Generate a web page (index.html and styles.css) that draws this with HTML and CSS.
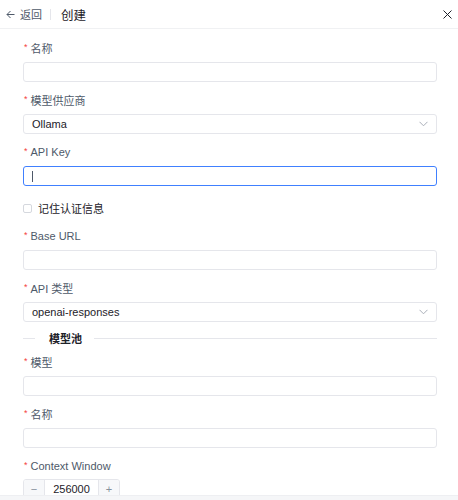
FILE: index.html
```html
<!DOCTYPE html>
<html lang="zh">
<head>
<meta charset="utf-8">
<title>创建</title>
<link rel="stylesheet" href="styles.css">
</head>
<body>
<div class="page">
  <header class="header">
    <div class="back">
      <svg class="back-icon" width="9" height="9" viewBox="0 0 9 9"><path d="M8.5 4.5H1M4.5 1L1 4.5L4.5 8" fill="none" stroke="#4e5969" stroke-width="1"/></svg>
      <span class="back-text">返回</span>
    </div>
    <span class="vsep"></span>
    <span class="title">创建</span>
    <svg class="close" width="9" height="9" viewBox="0 0 9 9"><path d="M0.5 0.5L8.5 8.5M8.5 0.5L0.5 8.5" stroke="#1d2129" stroke-width="1"/></svg>
  </header>
  <main class="form">
    <div class="field">
      <label class="label"><span class="req">*</span>名称</label>
      <div class="input"></div>
    </div>
    <div class="field">
      <label class="label"><span class="req">*</span>模型供应商</label>
      <div class="input select"><span class="value">Ollama</span><svg class="chev" width="9" height="6" viewBox="0 0 9 6"><path d="M0.5 0.8L4.5 4.8L8.5 0.8" fill="none" stroke="#a9aeb8" stroke-width="1"/></svg></div>
    </div>
    <div class="field">
      <label class="label"><span class="req">*</span>API Key</label>
      <div class="input focused"><span class="caret"></span></div>
    </div>
    <div class="check-row">
      <span class="checkbox"></span>
      <span class="check-text">记住认证信息</span>
    </div>
    <div class="field">
      <label class="label"><span class="req">*</span>Base URL</label>
      <div class="input"></div>
    </div>
    <div class="field">
      <label class="label"><span class="req">*</span>API 类型</label>
      <div class="input select"><span class="value">openai-responses</span><svg class="chev" width="9" height="6" viewBox="0 0 9 6"><path d="M0.5 0.8L4.5 4.8L8.5 0.8" fill="none" stroke="#a9aeb8" stroke-width="1"/></svg></div>
    </div>
    <div class="divider">
      <span class="line short"></span>
      <span class="divider-text">模型池</span>
      <span class="line"></span>
    </div>
    <div class="field">
      <label class="label"><span class="req">*</span>模型</label>
      <div class="input"></div>
    </div>
    <div class="field">
      <label class="label"><span class="req">*</span>名称</label>
      <div class="input"></div>
    </div>
    <div class="field">
      <label class="label last"><span class="req">*</span>Context Window</label>
      <div class="stepper">
        <span class="step-btn">−</span>
        <span class="step-value">256000</span>
        <span class="step-btn">+</span>
      </div>
    </div>
  </main>
  <footer class="footer"></footer>
</div>
</body>
</html>
```

FILE: styles.css
```css
* { box-sizing: border-box; }
html, body { margin: 0; padding: 0; background: #fff; }
body {
  font-family: "Liberation Sans", "Noto Sans CJK SC", sans-serif;
  color: #1d2129;
}
.page {
  height: 100vh;
  display: flex;
  flex-direction: column;
  overflow: hidden;
}
.header {
  height: 29px;
  flex: none;
  display: flex;
  align-items: center;
  padding: 0 4px 0 6px;
  border-bottom: 1px solid #f0f1f3;
}
.back {
  display: flex;
  align-items: center;
  gap: 5px;
  font-size: 11px;
  color: #4e5969;
}
.back-icon { display: block; }
.vsep {
  width: 1px;
  height: 11px;
  background: #e5e6eb;
  margin: 0 10px 0 8px;
}
.title {
  font-size: 12.5px;
  color: #1d2129;
}
.close { margin-left: auto; margin-right: 2px; display: block; }

.form {
  flex: 1;
  overflow: hidden;
  padding: 11px 21px 0 23px;
}
.field { margin-bottom: 10px; }
.label {
  display: flex;
  align-items: center;
  height: 16px;
  margin-bottom: 6px;
  font-size: 11px;
  color: #4e5969;
}
.label.last { margin-bottom: 5px; }
.req {
  color: #f53f3f;
  font-size: 9px;
  margin: 0 3px 0 1px;
  position: relative;
  top: -1px;
}
.input {
  height: 20px;
  border: 1px solid #e5e6eb;
  border-radius: 3px;
  background: #fff;
  display: flex;
  align-items: center;
  padding: 0 8px;
}
.input.focused { border-color: #4080ff; }
.caret {
  width: 1px;
  height: 11px;
  background: #4e5969;
}
.select .value {
  font-size: 11px;
  color: #1d2129;
  flex: 1;
}
.chev { display: block; }

.check-row {
  display: flex;
  align-items: center;
  height: 16px;
  margin: 14px 0 12px;
}
.checkbox {
  width: 9px;
  height: 9px;
  border: 1px solid #d5d8de;
  border-radius: 2px;
  margin-right: 6px;
}
.check-text {
  font-size: 11px;
  color: #1d2129;
}

.divider {
  display: flex;
  align-items: center;
  height: 16px;
  margin: -2px 0 8px;
}
.line {
  flex: 1;
  height: 1px;
  background: #e5e6eb;
}
.line.short { flex: none; width: 12px; }
.divider-text {
  font-size: 11px;
  font-weight: bold;
  color: #1d2129;
  padding: 0 12px 0 14px;
}

.stepper {
  width: 97px;
  height: 20px;
  display: flex;
  border: 1px solid #e5e6eb;
  border-radius: 3px;
  overflow: hidden;
}
.step-btn {
  width: 20px;
  flex: none;
  display: flex;
  align-items: center;
  justify-content: center;
  background: #f7f8fa;
  color: #86909c;
  font-size: 11px;
  line-height: 10px;
}
.step-value {
  flex: 1;
  display: flex;
  align-items: center;
  justify-content: center;
  font-size: 11px;
  line-height: 11px;
  color: #1d2129;
  border-left: 1px solid #e5e6eb;
  border-right: 1px solid #e5e6eb;
}
.footer {
  height: 5px;
  flex: none;
  background: #f5f6f8;
  border-top: 1px solid #eeeff2;
}
```
